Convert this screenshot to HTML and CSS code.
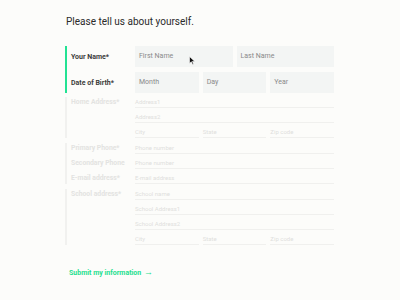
FILE: index.html
```html
<!DOCTYPE html>
<html lang="en">
<head>
    <meta charset="UTF-8">
    <meta name="viewport" content="width=device-width, initial-scale=1.0">
    <title>About you</title>
    <link rel="stylesheet" href="styles.css">
</head>
<body>
    <div class="form">
        <h1 class="title">Please tell us about yourself.</h1>

        <!-- Name and birth date (active step) -->
        <div class="section active">
            <div class="row">
                <span class="label">Your Name*</span>
                <div class="fields">
                    <div class="box">First Name</div>
                    <div class="box">Last Name</div>
                </div>
            </div>
            <div class="row">
                <span class="label">Date of Birth*</span>
                <div class="fields">
                    <div class="box">Month</div>
                    <div class="box">Day</div>
                    <div class="box">Year</div>
                </div>
            </div>
            <svg class="cursor" width="7" height="9" viewBox="0 0 7 9">
                <path d="M0.5 0.5 L0.5 7.5 L2.3 5.8 L3.6 8.5 L4.6 8 L3.4 5.4 L5.8 5.4 Z" fill="#111" stroke="#fff" stroke-width="0.6"/>
            </svg>
        </div>

        <!-- Home address -->
        <div class="section">
            <div class="line">
                <span class="label">Home Address*</span>
                <div class="fields"><div class="under">Address1</div></div>
            </div>
            <div class="line">
                <span class="label"></span>
                <div class="fields"><div class="under">Address2</div></div>
            </div>
            <div class="line">
                <span class="label"></span>
                <div class="fields">
                    <div class="under">City</div>
                    <div class="under">State</div>
                    <div class="under">Zip code</div>
                </div>
            </div>
        </div>

        <!-- Contact -->
        <div class="section">
            <div class="line">
                <span class="label">Primary Phone*</span>
                <div class="fields"><div class="under">Phone number</div></div>
            </div>
            <div class="line">
                <span class="label">Secondary Phone</span>
                <div class="fields"><div class="under">Phone number</div></div>
            </div>
            <div class="line">
                <span class="label">E-mail address*</span>
                <div class="fields"><div class="under">E-mail address</div></div>
            </div>
        </div>

        <!-- School -->
        <div class="section">
            <div class="line">
                <span class="label">School address*</span>
                <div class="fields"><div class="under">School name</div></div>
            </div>
            <div class="line">
                <span class="label"></span>
                <div class="fields"><div class="under">School Address1</div></div>
            </div>
            <div class="line">
                <span class="label"></span>
                <div class="fields"><div class="under">School Address2</div></div>
            </div>
            <div class="line">
                <span class="label"></span>
                <div class="fields">
                    <div class="under">City</div>
                    <div class="under">State</div>
                    <div class="under">Zip code</div>
                </div>
            </div>
        </div>

        <a class="submit" href="#">Submit my information <span class="arrow">&rarr;</span></a>
    </div>
</body>
</html>
```

FILE: styles.css
```css
body {
    margin: 0;
    background: #fcfcfa;
    font-family: Roboto, "Liberation Sans", sans-serif;
}
.form {
    width: 269px;
    margin-left: 65px;
    padding-top: 15px;
}
.title {
    margin: 0 0 17px 1px;
    font-size: 10px;
    font-weight: 400;
    line-height: 14px;
    color: #2a2a2a;
}
.section {
    position: relative;
    border-left: 2px solid #f1f1ef;
    padding-left: 4px;
    margin-bottom: 5px;
}
.section.active {
    border-left-color: #22e293;
    margin-bottom: 4px;
}
.row, .line {
    display: grid;
    grid-template-columns: 64px 1fr;
    align-items: center;
}
.row + .row {
    margin-top: 5px;
}
.label {
    font-size: 7px;
    font-weight: 700;
    color: #e3e3e1;
    white-space: nowrap;
}
.active .label {
    color: #3c3c3c;
}
.fields {
    display: flex;
    gap: 4px;
}
.box {
    flex: 1;
    height: 21px;
    line-height: 21px;
    padding-left: 4px;
    background: #f3f5f4;
    font-size: 7px;
    color: #8a8a8a;
}
.line {
    align-items: start;
}
.line + .line {
    margin-top: 4px;
}
.line .label {
    line-height: 10px;
    font-size: 6.8px;
}
.under {
    flex: 1;
    height: 10px;
    line-height: 10px;
    border-bottom: 1px solid #f0f0ee;
    font-size: 6px;
    color: #dfdfdd;
}
.cursor {
    position: absolute;
    left: 122px;
    top: 10px;
}
.submit {
    display: inline-block;
    margin: 17px 0 0 4px;
    font-size: 7px;
    font-weight: 700;
    color: #1fdf8f;
    text-decoration: none;
}
.arrow {
    margin-left: 1px;
    font-size: 9px;
}
```
